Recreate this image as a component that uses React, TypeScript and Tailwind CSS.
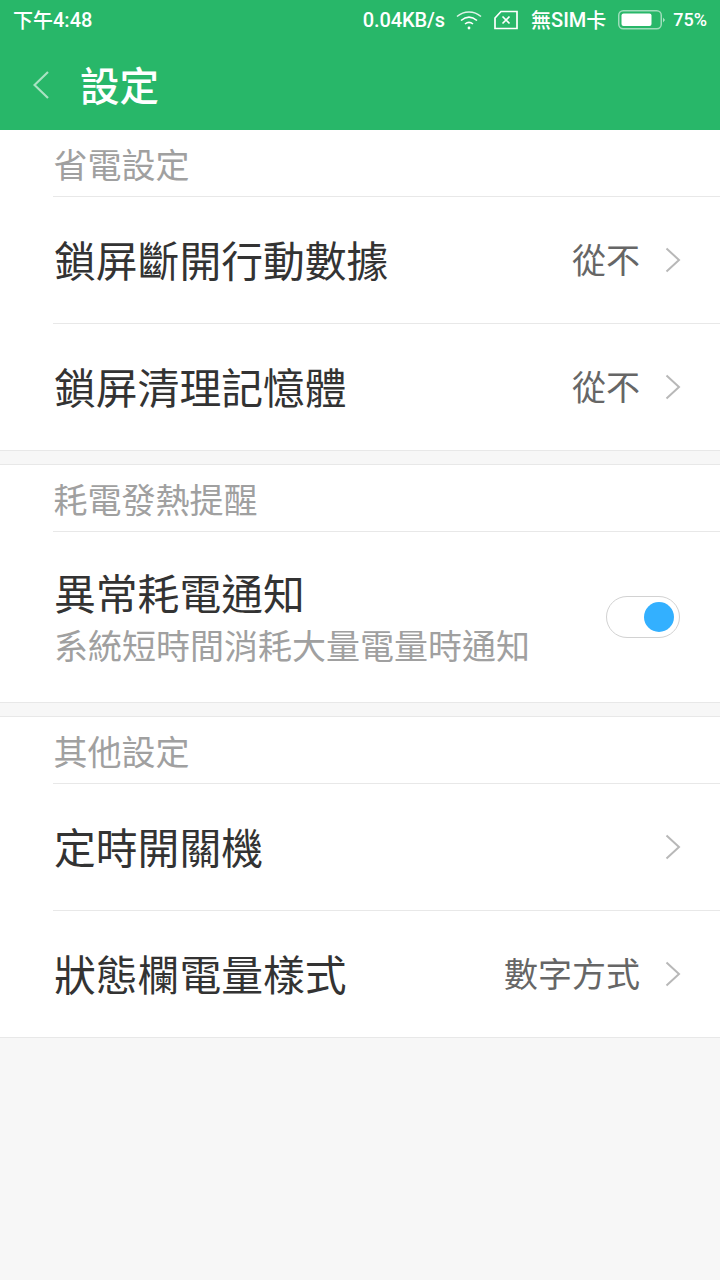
import React from "react";

const cjk = { fontFamily: '"Noto Sans CJK TC", "Noto Sans CJK SC", Roboto, sans-serif' };

const Chevron = () => (
  <svg width="16" height="26" viewBox="0 0 16 26" fill="none" className="ml-[25px] shrink-0 -mt-[1px]">
    <path d="M1.5 1.5 L14 13 L1.5 24.5" stroke="#b8b8b8" strokeWidth="2" />
  </svg>
);

const Row = ({ title, value, last }: { title: string; value?: string; last?: boolean }) => (
  <div className="ml-[53px]">
    <div
      className={`flex items-center pl-px pr-[39px] ${last ? "h-[126px]" : "h-[127px] border-b border-[#e8e8e8]"}`}
    >
      <div className="flex-1 text-[41.8px] leading-none text-[#333333] -mt-[1px]">{title}</div>
      {value && <div className="text-[34px] leading-none text-[#666666] -mt-[3px]">{value}</div>}
      <Chevron />
    </div>
  </div>
);

const SectionLabel = ({ text }: { text: string }) => (
  <div className="ml-[53px] h-[67px] pt-[1px] flex items-center border-b border-[#e8e8e8]">
    <span className="pl-[0.5px] text-[34px] leading-none text-[#a0a0a0]">{text}</span>
  </div>
);

const StatusBar = () => (
  <div className="h-[40px] flex items-center pl-[13px] pr-[13px] text-white font-medium text-[20px] leading-none">
    <span className="flex-1 flex items-center">
      下午<span style={{ fontFamily: "Roboto" }}>4:48</span>
    </span>
    <span className="tracking-[-0.1px]" style={{ fontFamily: "Roboto" }}>0.04KB/s</span>
    <svg width="26" height="20" viewBox="0 0 26 20" fill="none" stroke="white" strokeWidth="1.6" className="ml-[11px]">
      <path d="M1 6.5 C8 0.5 18 0.5 25 6.5" opacity="0.85" />
      <path d="M5 10.5 C10 6.2 16 6.2 21 10.5" />
      <path d="M9 14 C11.5 12 14.5 12 17 14" />
      <circle cx="13" cy="18" r="1.4" fill="white" stroke="none" />
    </svg>
    <svg width="24" height="20" viewBox="0 0 24 20" fill="none" stroke="white" strokeWidth="1.7" className="ml-[12px] -mt-[1px]">
      <path d="M7 1.5 H23 V18.5 H1 V8 Z" />
      <path d="M8.5 6.5 L15.5 13.5 M15.5 6.5 L8.5 13.5" />
    </svg>
    <span className="ml-[13px] flex items-center">
      無<span style={{ fontFamily: "Roboto" }}>SIM</span>卡
    </span>
    <svg width="47" height="20" viewBox="0 0 47 20" fill="none" className="ml-[12px]">
      <rect x="0.75" y="0.75" width="42.5" height="18" rx="4.5" stroke="white" strokeOpacity="0.55" strokeWidth="1.5" />
      <rect x="3.5" y="3.5" width="30" height="12.5" rx="2" fill="white" />
      <path d="M45 7.5 L47 10 L45 12.5 Z" fill="white" fillOpacity="0.6" />
    </svg>
    <span className="ml-[8px] text-[18px]" style={{ fontFamily: "Roboto" }}>75%</span>
  </div>
);

export default function App() {
  return (
    <div className="w-[720px] h-[1280px] bg-[#f7f7f7] overflow-hidden" style={cjk}>
      <div className="h-[130px] bg-[#28b769]">
        <StatusBar />
        <div className="h-[90px] flex items-center pl-[33px]">
          <svg width="16" height="28" viewBox="0 0 16 28" fill="none">
            <path d="M15 1 L1.5 14 L15 27" stroke="white" strokeOpacity="0.6" strokeWidth="2.2" />
          </svg>
          <div className="ml-[31px] text-[39.5px] leading-none font-medium text-white -mt-[2px]">設定</div>
        </div>
      </div>

      <div className="bg-white border-b border-[#e8e8e8]">
        <SectionLabel text="省電設定" />
        <Row title="鎖屏斷開行動數據" value="從不" />
        <Row title="鎖屏清理記憶體" value="從不" last />
      </div>

      <div className="mt-[13px] bg-white border-y border-[#e8e8e8]">
        <SectionLabel text="耗電發熱提醒" />
        <div className="h-[170px] pl-[54px] pr-[40px] flex items-center">
          <div className="flex-1">
            <div className="text-[41.8px] leading-none text-[#333333]">異常耗電通知</div>
            <div className="text-[34px] leading-none mt-[14px] text-[#a0a0a0]">系統短時間消耗大量電量時通知</div>
          </div>
          <div className="w-[74px] h-[42px] rounded-full border border-[#d2d2d2] bg-white flex items-center justify-end pr-[5px]">
            <div className="w-[30px] h-[30px] rounded-full bg-[#33b0ff]" />
          </div>
        </div>
      </div>

      <div className="mt-[13px] bg-white border-y border-[#e8e8e8]">
        <SectionLabel text="其他設定" />
        <Row title="定時開關機" />
        <Row title="狀態欄電量樣式" value="數字方式" last />
      </div>
    </div>
  );
}
